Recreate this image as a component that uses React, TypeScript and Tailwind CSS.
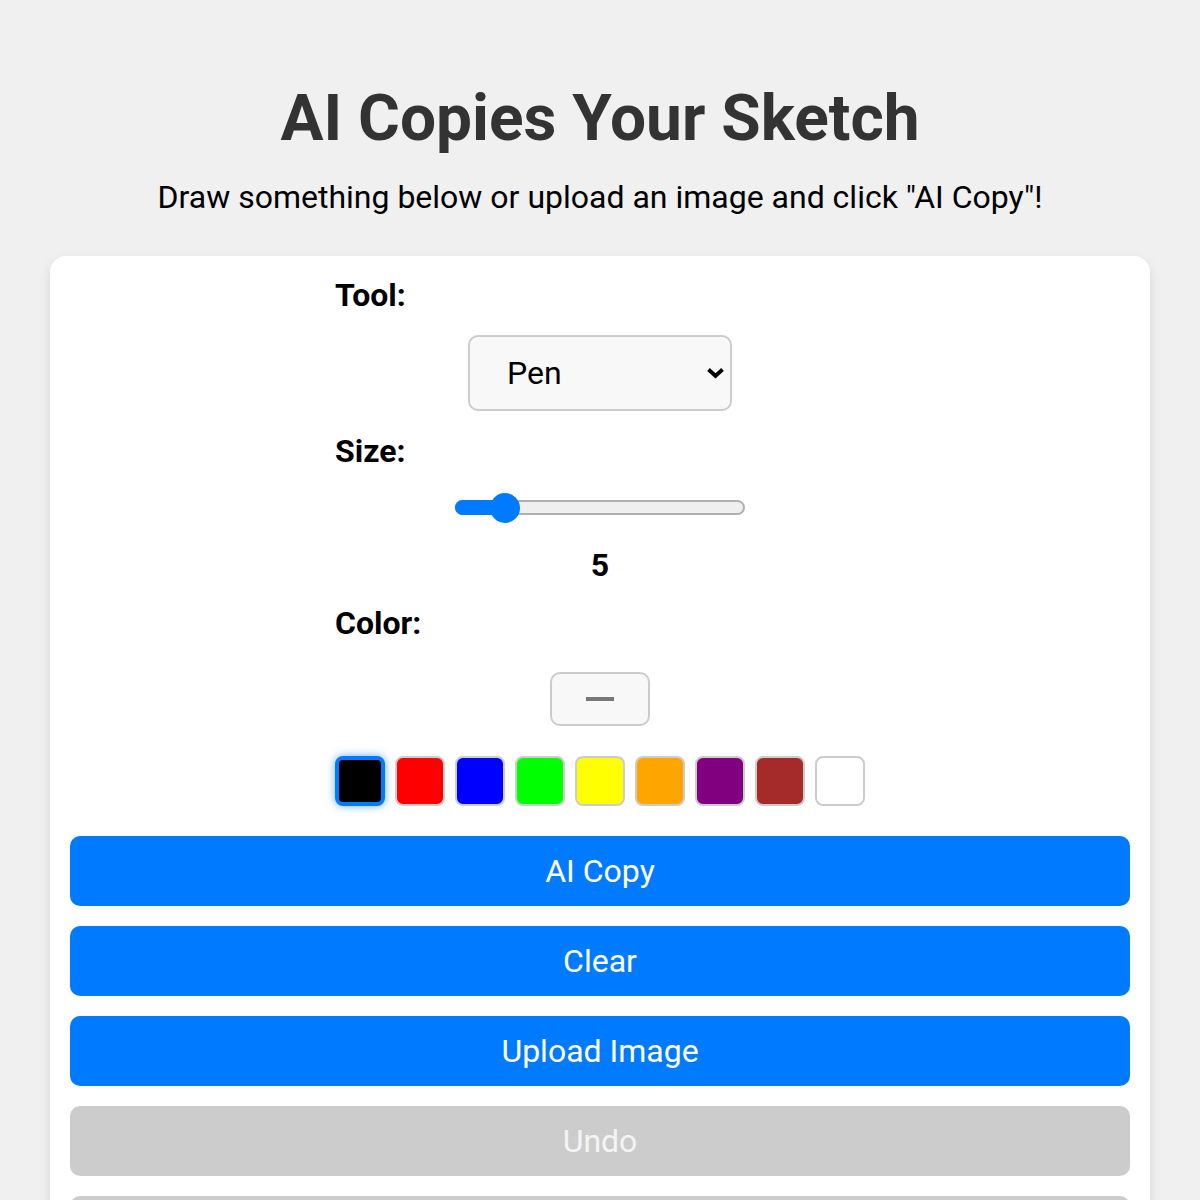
import { useState } from "react";

const colors = ["#000000", "#ff0000", "#0000ff", "#00ff00", "#ffff00", "#ffa500", "#800080", "#a52a2a", "#ffffff"];

const App = () => {
  const [tool, setTool] = useState("pen");
  const [size] = useState(5);
  const [color, setColor] = useState("#000000");

  // thumb position on a 1..30 range, track is 290 wide, thumb 30
  const thumbLeft = ((size - 1) / 29) * 260;

  return (
    <div className="min-h-screen bg-[#f0f0f0] font-['Roboto',sans-serif] flex flex-col items-center pt-[81px]">
      <h1 className="text-[64px] leading-[76px] font-bold text-[#333]">AI Copies Your Sketch</h1>
      <p className="mt-[21px] text-[32px] leading-[38px] text-black">
        Draw something below or upload an image and click "AI Copy"!
      </p>

      <div className="mt-[40px] w-[1100px] bg-white rounded-[16px] shadow-[0_4px_12px_rgba(0,0,0,0.1)] p-5">
        <div className="w-[530px] mx-auto flex flex-col">
          <label className="text-[32px] leading-[38px] font-bold text-black">Tool:</label>
          <div className="mt-[21px] flex justify-center">
            <div className="relative w-[264px] h-[76px]">
              <select
                value={tool}
                onChange={(e) => setTool(e.target.value)}
                className="appearance-none w-full h-full pl-[37px] pr-10 text-[32px] text-black bg-[#f8f8f8] border-2 border-[#ccc] rounded-[10px] outline-none"
              >
                <option value="pen">Pen</option>
                <option value="eraser">Eraser</option>
              </select>
              <svg
                className="absolute right-[7px] top-1/2 -translate-y-1/2 pointer-events-none"
                width="19"
                height="12"
                viewBox="0 0 19 12"
              >
                <path d="M2.5 2.5 L9.5 9 L16.5 2.5" fill="none" stroke="black" strokeWidth="3.8" />
              </svg>
            </div>
          </div>

          <label className="mt-[21px] text-[32px] leading-[38px] font-bold text-black">Size:</label>
          <div className="mt-[22px] flex justify-center">
            <div className="relative w-[290px] h-[32px]">
              <div className="absolute left-0 right-0 top-[8px] h-[15px] rounded-full bg-[#efefef] border-2 border-[#b0b0b0]" />
              <div
                className="absolute left-0 top-[8px] h-[15px] rounded-full bg-[#007bff]"
                style={{ width: thumbLeft + 15 }}
              />
              <div
                className="absolute top-[1px] w-[30px] h-[30px] rounded-full bg-[#007bff]"
                style={{ left: thumbLeft - 1 }}
              />
            </div>
          </div>
          <div className="mt-[22px] text-center text-[32px] leading-[38px] font-bold text-black">{size}</div>

          <label className="mt-[20px] text-[32px] leading-[38px] font-bold text-black">Color:</label>
          <div className="mt-[30px] flex justify-center">
            <div className="w-[100px] h-[54px] bg-[#f8f8f8] border-2 border-[#ccc] rounded-[10px] flex items-center justify-center">
              <div className="w-[28px] h-[4px] bg-[#777]" />
            </div>
          </div>

          <div className="mt-[30px] flex gap-[10px]">
            {colors.map((c) => (
              <button
                key={c}
                onClick={() => setColor(c)}
                className={
                  color === c
                    ? "w-[50px] h-[50px] rounded-[8px] border-[4px] border-[#007bff] shadow-[0_0_8px_rgba(0,123,255,0.6)]"
                    : "w-[50px] h-[50px] rounded-[8px] border-2 border-[#ccc]"
                }
                style={{ backgroundColor: c }}
              />
            ))}
          </div>
        </div>

        <div className="mt-[30px] flex flex-col gap-5">
          <button className="h-[70px] rounded-[10px] bg-[#007bff] text-white text-[32px]">AI Copy</button>
          <button className="h-[70px] rounded-[10px] bg-[#007bff] text-white text-[32px]">Clear</button>
          <button className="h-[70px] rounded-[10px] bg-[#007bff] text-white text-[32px]">Upload Image</button>
          <button disabled className="h-[70px] rounded-[10px] bg-[#ccc] text-[#f4f4f4] text-[32px]">Undo</button>
          <button disabled className="h-[70px] rounded-[10px] bg-[#ccc] text-[#f4f4f4] text-[32px]">Redo</button>
        </div>
      </div>
    </div>
  );
};

export default App;
